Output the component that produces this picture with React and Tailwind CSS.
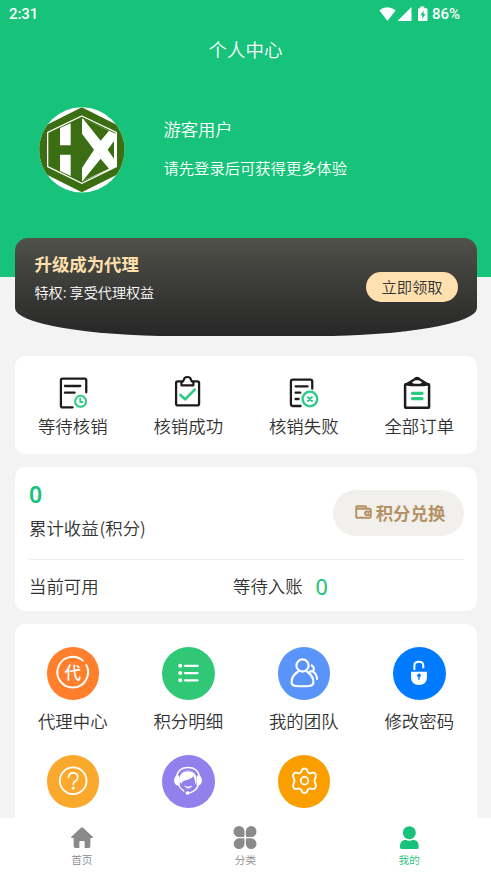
import React from "react";

const INK = "#1c1c1c";
const GREEN = "#2bcb83";

function StatusBar() {
  return (
    <div className="flex h-7 items-center justify-between pl-[9px] pr-[31px] font-['Roboto',sans-serif] text-[15px] font-medium leading-none text-white">
      <span className="tracking-[-0.1px]">2:31</span>
      <div className="flex items-center">
        <svg width="50" height="18" viewBox="0 0 50 18" fill="#fff">
          <path d="M.3 4.300Q8 -1.800 16.700 4.300L8.500 15Z" transform="translate(0 1)" />
          <path d="M32.500 2V16H18.500Z" />
          <path d="M41.300 1.500h4v1.800h2.200a1 1 0 0 1 1 1V15a1 1 0 0 1-1 1h-7.500a1 1 0 0 1-1-1V4.300a1 1 0 0 1 1-1h1.300Z" />
          <path d="M44.600 5.500l-3.200 4.800h1.900v3.600l3.200-4.900h-1.900Z" fill="#17c27a" />
        </svg>
        <span className="ml-[3px]">86%</span>
      </div>
    </div>
  );
}

function Avatar() {
  return (
    <svg width="86" height="86" viewBox="27 35 258 258" role="img" aria-label="HX">
      <defs>
        <clipPath id="disc"><circle cx="155.500" cy="163.500" r="128" /></clipPath>
      </defs>
      <g clipPath="url(#disc)">
        <rect x="27" y="35" width="258" height="258" fill="#fff" />
        <path d="M155.500 36L285 101V226L155.500 291L26 226V101Z" fill="#3b6e12" />
        <path d="M155.500 62L259 111V214L155.500 264L53 214V111Z" fill="#3b6e12" stroke="#fff" strokeWidth="4" />
        <path d="M90 98L122 84V150H90ZM90 178H122V242L90 227Z" fill="#fff" />
        <path d="M156 69L259 116V214L156 258V218L192 163L156 115Z" fill="#fff" />
        <path d="M158 69L237 106L212 136ZM252 137V190L233 163ZM212 190L237 220L158 257Z" fill="#3b6e12" />
      </g>
    </svg>
  );
}

const orders = [
  {
    label: "等待核销",
    box: "134.250 72 108 108",
    art: (
      <>
        <path d="M187 172H157Q152 172 152 167V91Q152 86 157 86H223Q228 86 228 91V127M164 108H210M164 128H193" stroke={INK} strokeWidth="6.800" />
        <circle cx="211" cy="154" r="16.500" stroke={GREEN} strokeWidth="6" />
        <path d="M210 146V156H217" stroke={GREEN} strokeWidth="5.500" />
      </>
    ),
  },
  {
    label: "核销成功",
    box: "480.750 72 108 108",
    art: (
      <>
        <rect x="499" y="94" width="69" height="72" rx="5" stroke={INK} strokeWidth="6.800" />
        <path d="M515 106H551V97Q545 96 544 90Q543 81 533 81Q523 81 522 90Q521 96 515 97Z" fill="#fff" stroke={INK} strokeWidth="6.500" />
        <path d="M512 135L526 148L555 119" stroke={GREEN} strokeWidth="8" />
      </>
    ),
  },
  {
    label: "核销失败",
    box: "122.250 72 108 108",
    art: (
      <>
        <path d="M166 168H143Q137 168 137 162V95Q137 89 143 89H195Q201 89 201 95V116M151 109H187M151 128H165M151 147H160" stroke={INK} strokeWidth="6.800" />
        <circle cx="194" cy="147" r="22" stroke={GREEN} strokeWidth="7" />
        <path d="M188 142L200 153M200 142L188 153" stroke={GREEN} strokeWidth="6" />
      </>
    ),
  },
  {
    label: "全部订单",
    box: "468.750 72 108 108",
    art: (
      <>
        <rect x="481" y="103" width="72" height="70" rx="2" stroke={INK} strokeWidth="7.500" />
        <path d="M482 103L508 87Q512 82 517 82Q522 82 526 87L552 103L538 107H498Z" fill={INK} stroke={INK} strokeWidth="4" />
        <path d="M502 97L512 91H522L532 97Q530 101 525 101H509Q504 101 502 97Z" fill="#fff" />
        <path d="M503 130H532M503 146H532" stroke={GREEN} strokeWidth="9.500" />
      </>
    ),
  },
];

const services = [
  {
    id: "agent",
    label: "代理中心",
    box: "108.750 81 159 159",
    color: "bg-[#ff7f2c]",
    art: (
      <>
        <path d="M217 122A46.500 46.500 0 1 0 228 136" strokeWidth="6" />
        <text x="187" y="179" textAnchor="middle" fontSize="50" fontWeight="500" fill="#fff" stroke="none">代</text>
      </>
    ),
  },
  {
    id: "points",
    label: "积分明细",
    box: "455.250 81 159 159",
    color: "bg-[#30c876]",
    art: (
      <>
        <path d="M525 138H563M525 160H563M525 182H563" strokeWidth="7" />
        <path d="M510.500 138h.1M510.500 160h.1M510.500 182h.1" strokeWidth="12" />
      </>
    ),
  },
  {
    id: "team",
    label: "我的团队",
    box: "96.750 81 159 159",
    color: "bg-[#5a93f9]",
    art: (
      <>
        <circle cx="171" cy="137" r="18.500" strokeWidth="6.500" />
        <path d="M157 156Q138 168 138 188Q138 198 150 199Q171 201 192 199Q204 198 204 188Q204 168 185 156M199 137Q210 144 202 155Q214 162 215 178M194 155H202" strokeWidth="6.500" />
      </>
    ),
  },
  {
    id: "password",
    label: "修改密码",
    box: "443.250 81 159 159",
    color: "bg-[#007bff]",
    art: (
      <>
        <path d="M508 151V137Q508 126 522 126Q535 126 535 137V145" strokeWidth="6" strokeLinecap="butt" />
        <path d="M498 156H546V174Q545 195 522 196Q499 195 498 174Z" fill="#fff" stroke="none" />
        <path d="M522 168V179" stroke="#007bff" strokeWidth="4.500" />
        <circle cx="522" cy="167" r="5.500" fill="#007bff" stroke="none" />
      </>
    ),
  },
  {
    id: "help",
    box: "108.750 405 159 159",
    color: "bg-[#fba92c]",
    art: (
      <>
        <circle cx="188" cy="483" r="40.500" strokeWidth="5.500" />
        <path d="M174 473Q175 459 188 459Q202 460 202 472Q202 479 195 484Q188 488 188 495" strokeWidth="5" />
        <circle cx="188" cy="506" r="4.500" fill="#fff" stroke="none" />
      </>
    ),
  },
  {
    id: "service",
    box: "455.250 405 159 159",
    color: "bg-[#9280ec]",
    art: (
      <>
        <path d="M499 470Q505 443 534 443Q563 443 569 470" strokeWidth="5" />
        <path d="M503 467Q492 469 492 482Q492 495 503 497H509V467ZM565 467Q576 469 576 482Q576 495 565 497H560V467Z" fill="#fff" stroke="none" />
        <path d="M508 486Q506 452 534 452Q562 452 560 486L557 494Q556 482 550 468Q546 477 530 481Q517 483 514 492Z" fill="#fff" stroke="none" />
        <path d="M513 478Q518 457 534 457Q550 457 556 478Q552 472 550 466Q545 476 528 478Q518 479 513 486Z" fill="#fff" stroke="none" />
        <path d="M508 470Q513 453 534 453Q555 453 560 470" stroke="#9280ec" strokeWidth="2.500" />
        <path d="M505 494Q509 506 521 514M566 493Q560 514 541 519" strokeWidth="4.500" />
        <path d="M525 500Q534 511 545 500Q534 504 525 500Z" fill="#fff" strokeWidth="2" />
        <ellipse cx="533" cy="520" rx="6.500" ry="5.500" fill="#fff" stroke="none" />
      </>
    ),
  },
  {
    id: "settings",
    box: "96.750 405 159 159",
    color: "bg-[#fb9f00]",
    art: (
      <>
        <path d="M170 449Q177 443 184 449Q187 460 194 461Q204 456 209 461Q214 467 210 474Q205 483 210 492Q214 499 209 505Q204 510 194 506Q187 507 184 517Q177 523 170 517Q167 507 160 506Q150 510 145 505Q140 499 144 492Q149 483 144 474Q140 467 145 461Q150 456 160 461Q167 460 170 449Z" strokeWidth="5.500" />
        <circle cx="177" cy="483" r="11.500" strokeWidth="5.500" />
      </>
    ),
  },
];

const tabs = [
  {
    label: "首页",
    tone: "text-[#8a8a8a]",
    box: "210 45 72 72",
    art: <path d="M243 53Q246 50 249 53L278 80Q281 84 276 84H271V109Q271 114 266 114H254V96Q254 93 251 93H241Q238 93 238 96V114H226Q221 114 221 109V84H216Q211 84 214 80Z" />,
  },
  {
    label: "分类",
    tone: "text-[#8a8a8a]",
    box: "700.500 45 72 72",
    art: (
      <path d="M718.500 48A16.500 16.500 0 0 0 718.500 81H731Q735 81 735 77V64.500A16.500 16.500 0 0 0 718.500 48ZM755 48A16 16.500 0 0 1 755 81H743Q739 81 739 77V64.500A16 16.500 0 0 1 755 48ZM718.500 117A16 16 0 0 1 718.500 85H731Q735 85 735 89V101A16.500 16 0 0 1 718.500 117ZM755 117A16 16 0 0 0 755 85H743Q739 85 739 89V101A16 16 0 0 0 755 117Z" />
    ),
  },
  {
    label: "我的",
    tone: "text-[#17c27a]",
    box: "1191 45 72 72",
    art: (
      <>
        <circle cx="1228" cy="68" r="19.500" />
        <path d="M1200 107Q1200 92 1216 89Q1222 92 1228 92Q1234 92 1240 89Q1256 92 1256 107V112Q1256 117 1251 117H1205Q1200 117 1200 112Z" />
      </>
    ),
  },
];

export default function App() {
  return (
    <div className="flex h-[873px] w-[491px] flex-col overflow-hidden bg-[#f3f3f3] font-['Noto_Sans_CJK_SC',sans-serif] font-[350] text-[#333]">
      <header className="h-[277px] shrink-0 bg-[#17c27a] text-white">
        <StatusBar />
        <h1 className="mt-[7px] text-center text-[18.500px] leading-7">个人中心</h1>
        <div className="mt-11 flex pl-[39px]">
          <Avatar />
          <div className="ml-[38.500px] pt-2.5">
            <div className="text-[17.300px] leading-6">游客用户</div>
            <div className="mt-3.5 text-[15.300px] leading-6">请先登录后可获得更多体验</div>
          </div>
        </div>
      </header>

      <main className="relative -mt-[39px] flex min-h-0 flex-1 flex-col overflow-hidden pl-[15px] pr-3.5">
        <section className="flex h-[98px] shrink-0 justify-between rounded-t-[13px] rounded-bl-[160px_28px] rounded-br-[160px_28px] bg-gradient-to-b from-[#50514a] to-[#272727] pl-[19.500px] pr-[19px]">
          <div className="pt-[14px]">
            <h2 className="text-[17.400px] font-bold leading-6 text-[#ffe0ae]">升级成为代理</h2>
            <p className="mt-1 text-[14.100px] leading-6 text-white">特权: 享受代理权益</p>
          </div>
          <button className="mt-[34px] h-[30px] w-[92px] rounded-full bg-[#ffe0ae] pb-0.5 text-[15.300px] leading-7 text-[#333]">立即领取</button>
        </section>

        <section className="mt-5 grid h-[98px] shrink-0 grid-cols-4 rounded-[10px] bg-white pt-[18px]">
          {orders.map((o) => (
            <div key={o.label} className="flex flex-col items-center">
              <svg width="36" height="36" viewBox={o.box} fill="none" strokeLinecap="round" strokeLinejoin="round">{o.art}</svg>
              <span className="mt-1 text-[17.400px] leading-6">{o.label}</span>
            </div>
          ))}
        </section>

        <section className="mt-[13px] h-36 shrink-0 rounded-[10px] bg-white pl-3.5 pr-[13px]">
          <div className="flex h-[92px] justify-between">
            <div className="pt-[14px]">
              <div className="font-['Noto_Sans',sans-serif] text-[23px] font-semibold leading-[26px] text-[#17c27a]">0</div>
              <div className="mt-2 text-[17.400px] leading-[26px]">累计收益<span className="ml-px">(积分)</span></div>
            </div>
            <button className="mt-[23px] flex h-[46px] w-[131px] items-center justify-center rounded-full bg-[#f2f0ec] pl-[3px] text-[17.400px] font-bold text-[#b49164]">
              <svg className="mb-0.5 mr-1" width="17" height="14" viewBox="0 0 17 14" fill="none" stroke="currentColor" strokeWidth="1.900" strokeLinejoin="round">
                <path d="M1.200 4V2.300Q1.200 1.200 2.300 1.200H10.200Q11.200 1.200 11.200 2.300V3.700M1.200 3.700H14.600Q15.800 3.700 15.800 4.900V11.600Q15.800 12.800 14.600 12.800H2.400Q1.200 12.800 1.200 11.600ZM15.800 6.500H12Q10 6.700 10 8.300Q10 9.900 12 10.100H15.800M12.500 8.300H14" />
              </svg>
              <span className="leading-6">积分兑换</span>
            </button>
          </div>
          <div className="flex h-[52px] items-center border-t border-[#eee] pt-0.5 text-[17.400px]">
            <span className="w-[204px]">当前可用</span>
            <span>等待入账</span>
            <span className="ml-[13px] font-['Noto_Sans',sans-serif] text-[21.500px] font-normal leading-6 text-[#17c27a]">0</span>
          </div>
        </section>

        <section className="mt-[13px] grid min-h-0 flex-1 auto-rows-[108px] grid-cols-4 rounded-t-[10px] bg-white pt-[23px]">
          {services.map((s) => (
            <div key={s.id} className="flex flex-col items-center">
              <div className={"size-[52.5px] rounded-full " + s.color}>
                <svg className="size-full" viewBox={s.box} fill="none" stroke="#fff" strokeLinecap="round" strokeLinejoin="round">{s.art}</svg>
              </div>
              {s.label && <span className="mt-[9.500px] text-[17.400px] leading-6">{s.label}</span>}
            </div>
          ))}
        </section>
      </main>

      <nav className="grid h-[55px] shrink-0 grid-cols-3 bg-white pt-[7px]">
        {tabs.map((t) => (
          <div key={t.label} className={"flex flex-col items-center " + t.tone}>
            <svg width="24" height="24" viewBox={t.box} fill="currentColor">{t.art}</svg>
            <span className="mt-[3px] text-[10.700px] leading-4">{t.label}</span>
          </div>
        ))}
      </nav>
    </div>
  );
}
